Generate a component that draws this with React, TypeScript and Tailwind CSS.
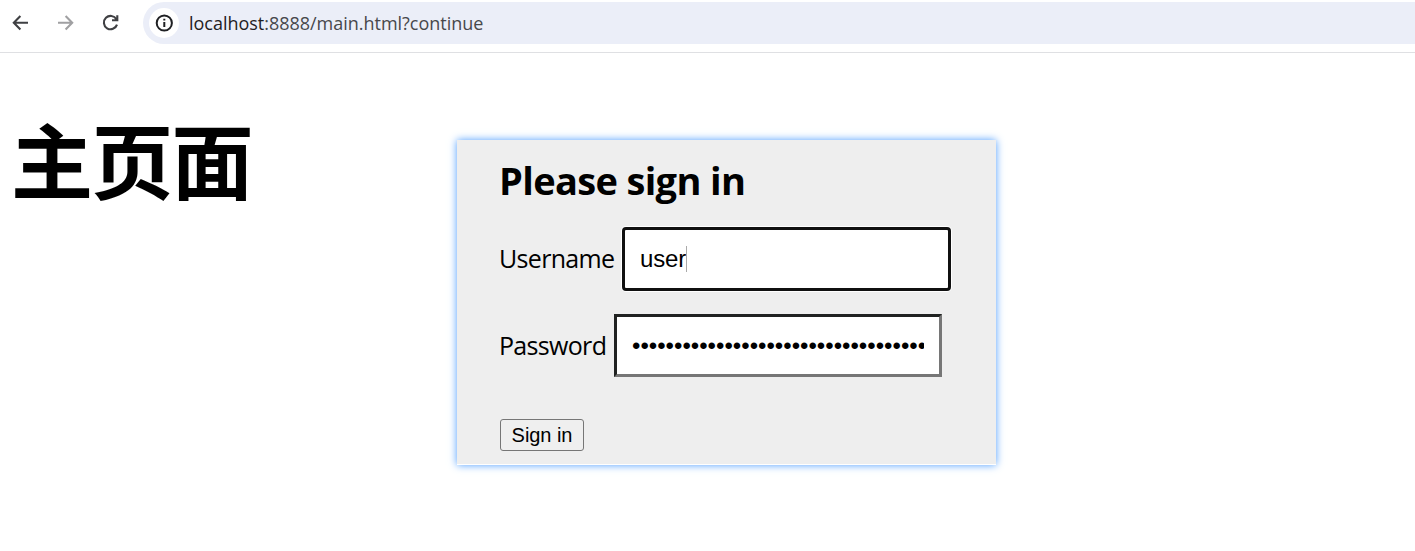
import React from 'react';

const SANS = "font-['Open_Sans','Noto_Sans_CJK_SC',sans-serif]";
const ARIAL = "font-['Liberation_Sans',sans-serif]";

function Toolbar() {
  return (
    <header className="flex h-[53px] items-start border-b border-[#dfe0e3] pt-[2px]">
      <div className="flex h-[42px] w-[143px] shrink-0 items-center pl-[12px]">
        <svg className="h-[18px] w-[18px] shrink-0" viewBox="0 0 18 18" fill="none" stroke="#3f4043" strokeWidth="2.1">
          <path d="M16 8.7H2.2M8.4 2L1.8 8.7L8.4 15.4" />
        </svg>
        <svg className="ml-[27px] h-[18px] w-[18px] shrink-0" viewBox="0 0 18 18" fill="none" stroke="#a0a0a2" strokeWidth="2.1">
          <path d="M1 8.7H14.8M8.6 2L15.2 8.7L8.6 15.4" />
        </svg>
        <svg className="ml-[27px] h-[18px] w-[18px] shrink-0" viewBox="0 0 18 18" fill="none" stroke="#3f4043" strokeWidth="2.1">
          <path d="M15 10.6A6.7 6.7 0 1 1 14.4 5.2M15.3 1.2V6.3H10" />
        </svg>
      </div>
      <div className="flex h-[42px] grow items-center rounded-l-full bg-[#ebeef8] pl-[6px]">
        <span className="flex h-[30px] w-[30px] items-center justify-center rounded-full bg-white">
          <svg className="h-[18px] w-[18px]" viewBox="0 0 18 18" fill="none">
            <circle cx="9.3" cy="9" r="7.6" stroke="#1f2023" strokeWidth="2" />
            <path d="M9.3 8V13M9.3 4.8V6.6" stroke="#1f2023" strokeWidth="2" />
          </svg>
        </span>
        <span className={`${SANS} ml-[10px] whitespace-nowrap text-[18px] leading-[24px] tracking-[-0.02px] text-[#47484c]`}>
          <span className="text-[#1f2023]">localhost</span>:8888/main.html?continue
        </span>
      </div>
    </header>
  );
}

export default function App() {
  return (
    <div className="h-[551px] w-full overflow-hidden bg-white text-black">
      <Toolbar />
      <main className="flex items-start">
        <h1 className="mt-[55px] ml-[11px] w-[446px] shrink-0 font-['Noto_Sans_CJK_SC',sans-serif] text-[82px] leading-[100px] font-bold tracking-[-1.8px]">主页面</h1>
        <form
          className="mt-[87px] h-[325px] w-[539px] shrink-0 border-b border-white bg-[#eeeeee] pl-[43px] shadow-[0_0_8px_#4d9dff]"
          onSubmit={(e) => e.preventDefault()}
        >
          <h2 className={`${SANS} -ml-px pt-[16px] text-[38px] leading-[48px] font-bold tracking-[-0.66px] whitespace-nowrap`}>Please sign in</h2>
          <div className="mt-[23px] flex h-[64px] items-center">
            <label className={`${SANS} -ml-px w-[123px] shrink-0 pb-[2px] text-[25px] leading-[32px] tracking-[-0.68px]`}>Username</label>
            <div className={`${ARIAL} flex h-[64px] w-[329px] items-center rounded-[4px] border-[3px] border-[#101010] bg-white pl-[15px] text-[24px] leading-[28px] shadow-[0_0_0_1px_white]`}>
              <span className="tracking-[-0.15px]">user</span>
              <span className="h-[26px] w-px bg-[#aaaaaa]" />
            </div>
          </div>
          <div className="mt-[23px] flex h-[63px] items-center">
            <label className={`${SANS} -ml-px w-[115px] shrink-0 pb-[2px] text-[25px] leading-[32px] tracking-[-0.68px]`}>Password</label>
            <div className="flex h-[63px] w-[328px] items-center border-[3px] border-t-[#202221] border-r-[#767676] border-b-[#767676] border-l-[#202221] bg-white pr-[15px] pl-[15px]">
              <span className={`${ARIAL} w-full overflow-hidden whitespace-nowrap text-[24px] leading-[28px]`}>{'•'.repeat(35)}</span>
            </div>
          </div>
          <button className={`${ARIAL} mt-[42px] flex h-[32px] w-[84px] items-center justify-center rounded-[3px] border border-[#767676] bg-[#efefef] text-[20px] leading-[24px] tracking-[-0.05px] whitespace-nowrap`}>
            Sign in
          </button>
        </form>
      </main>
    </div>
  );
}
